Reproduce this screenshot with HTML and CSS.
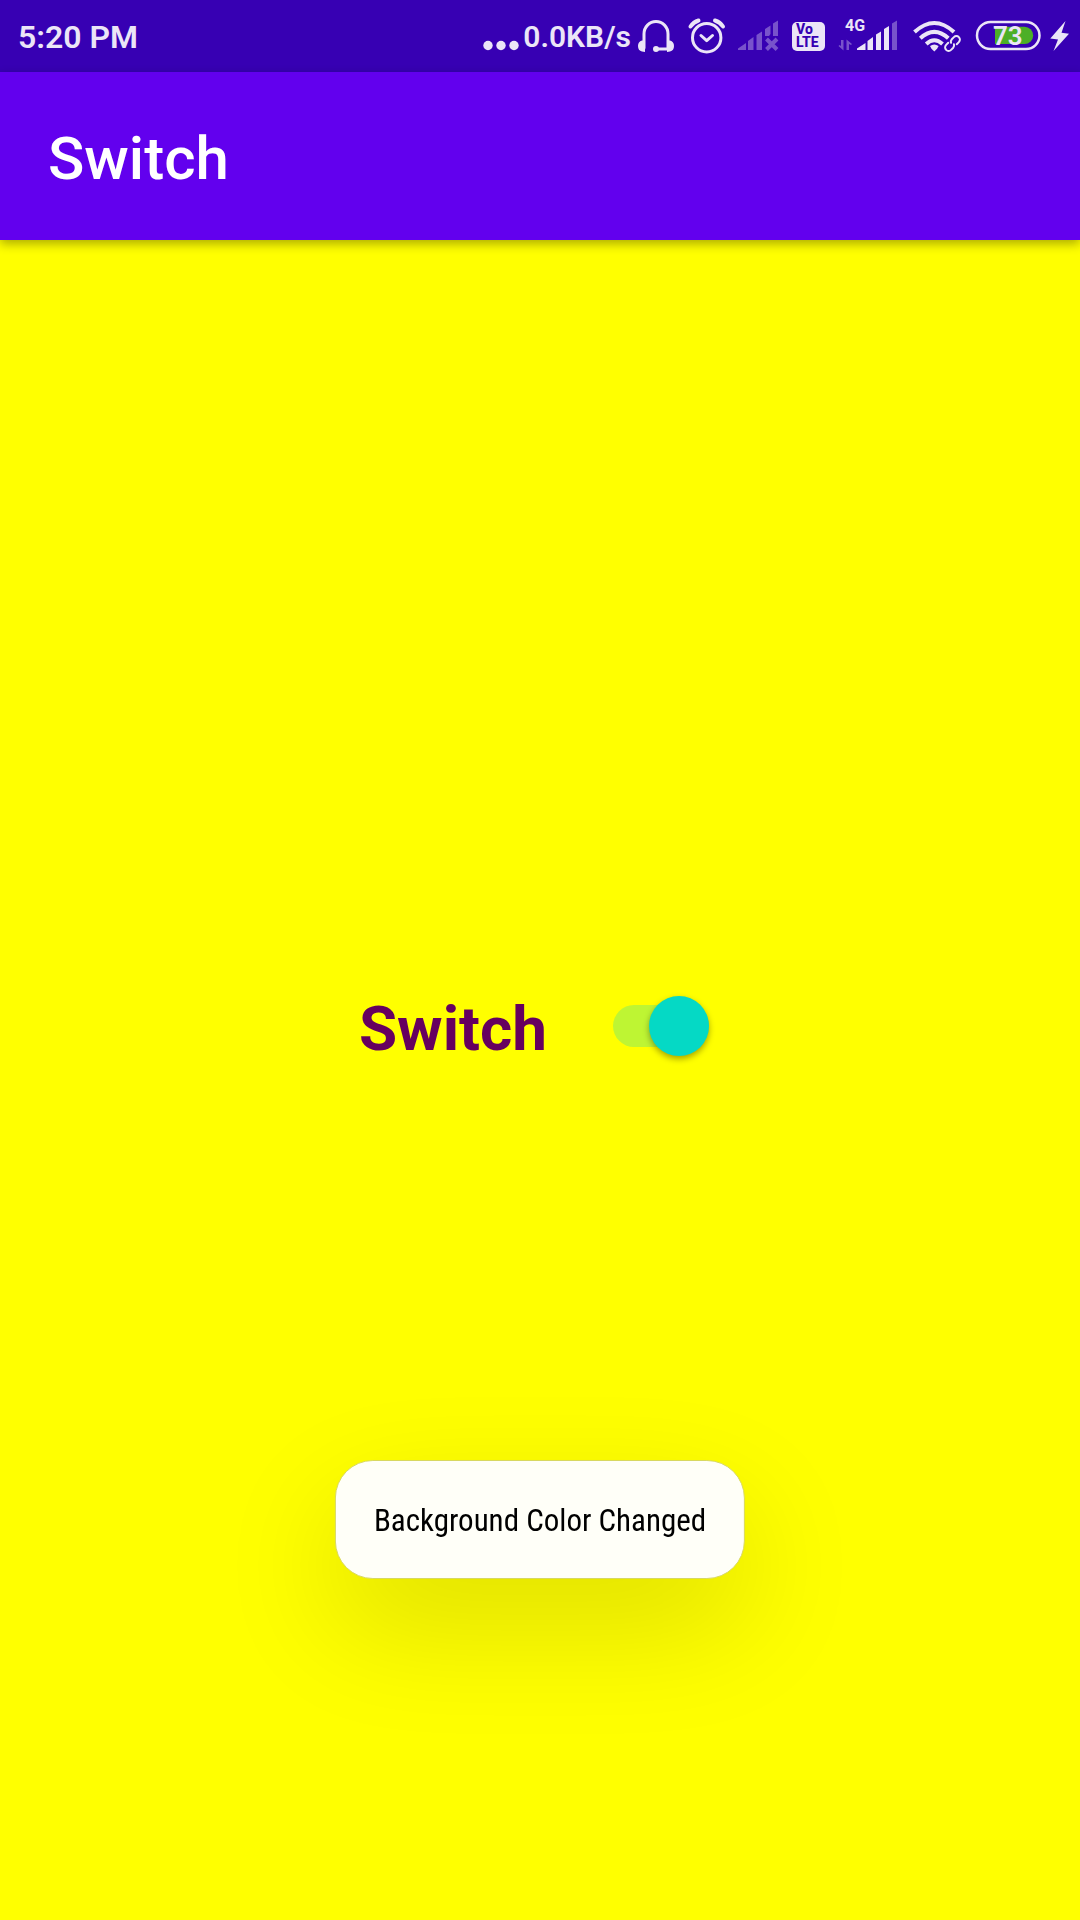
FILE: index.html
```html
<!DOCTYPE html>
<html lang="en">
<head>
<meta charset="utf-8">
<meta name="viewport" content="width=device-width, initial-scale=1">
<title>Switch</title>
<link rel="stylesheet" href="styles.css">
</head>
<body>
<div class="status-bar">
  <span class="clock">5:20 PM</span>
  <div class="status-icons">
    <div class="network-speed">
      <svg class="icon" width="36" height="44" viewBox="0 0 36 44" aria-hidden="true">
        <circle cx="5" cy="31.500" r="4.700"/><circle cx="18" cy="31.500" r="4.700"/><circle cx="31" cy="31.500" r="4.700"/>
      </svg>
      <span>0.0KB/s</span>
    </div>
    <!-- headset -->
    <svg class="icon" width="41" height="44" viewBox="0 0 41 44" aria-hidden="true">
      <path class="line" stroke-width="3" d="M7 34V20a12 12.500 0 0 1 24 0v14M19 35h12"/>
      <path d="M8 26.500H5q-4 1-4 5.500t4 5.500l3 .5zM30 26.500h3q4 1 4 5.500t-4 5.500l-3 .5z"/>
      <circle cx="19" cy="35" r="3"/>
    </svg>
    <!-- alarm -->
    <svg class="icon" width="43" height="44" viewBox="0 0 43 44" aria-hidden="true">
      <circle class="line" stroke-width="3" cx="20.700" cy="23.700" r="14.200"/>
      <path class="line" stroke-width="3" d="M15 21.500l5.700 5.200 5.800-5.200"/>
      <path class="line" stroke-width="4" d="M4.500 12.500q3-4.500 8-6M29 6.500q5 1.500 8 6"/>
    </svg>
    <!-- first SIM, no signal -->
    <svg class="icon faint" width="42" height="44" viewBox="0 0 42 44" aria-hidden="true">
      <path d="M1 36v-1.500L9 29v7zM11 36v-9l5.500-4v13zM19.500 36V21l5.500-3.500V36zM28 22v-7l5.500-3.500V20L32 22zM36 22V9.500L41 6.500V22z"/>
      <path class="cross" d="M29.500 25l10.500 10.500M40 25L29.500 35.500"/>
    </svg>
    <svg class="icon" width="40" height="44" viewBox="0 0 40 44" role="img" aria-label="VoLTE">
      <rect x="5" y="8" width="33" height="29" rx="5"/>
      <text class="volte" x="9" y="20">Vo</text>
      <text class="volte" x="9" y="33">LTE</text>
    </svg>
    <!-- second SIM, 4G -->
    <svg class="icon" width="66" height="44" viewBox="0 0 66 44" aria-hidden="true">
      <text class="generation" x="10" y="17">4G</text>
      <path class="faint" d="M6 26h2.500v10.500L3.500 32l1-1 1.500 1zM11.500 36V25.500l5.500 4.500-1 1-2-1v6z"/>
      <path d="M22 36v-1.500L30.500 29v7zM32.500 36v-9l5.500-4v13zM41 36V20.500l5-3V36zM49 36V15l5-3v24z"/>
      <path class="faint" d="M57 36V9.500l5-3V36z"/>
    </svg>
    <!-- wifi with link -->
    <svg class="icon" width="58" height="44" viewBox="0 0 58 44" aria-hidden="true">
      <path class="arc" d="M5.500 18Q25.300 0 45 18M11.300 24.200Q25.300 11.500 39.300 24.200M17.200 30Q25.300 22.500 33.500 30"/>
      <path d="M21 32q4.300-3 8.600 0l-1.500 2.800-2.800 2.700-2.800-2.700z"/>
      <g transform="translate(43.500 29.500) rotate(-45)">
        <path class="link-gap" d="M-5 0h10"/>
        <path class="link" d="M-2.500-3.500h-3a3.500 3.500 0 0 0 0 7h3a3.500 3.500 0 0 0 3-2M2.500 3.500h3a3.500 3.500 0 0 0 0-7h-3a3.500 3.500 0 0 0-3 2"/>
      </g>
    </svg>
    <svg class="icon" width="66" height="44" viewBox="0 0 66 44" role="img" aria-label="Battery 73 percent">
      <rect class="line" stroke-width="2.500" x="2" y="8" width="62.500" height="27" rx="13.500"/>
      <path class="charge" d="M20 12.700h29.500a8.700 8.700 0 0 1 0 17.400H20z"/>
      <text class="level" x="18" y="31">73</text>
    </svg>
    <!-- charging -->
    <svg class="icon" width="21" height="44" viewBox="0 0 21 44" aria-hidden="true">
      <path d="M16.500 7L1.300 24.500l7.700 1L4.500 37 20 19.700l-7.500-1z"/>
    </svg>
  </div>
</div>
<header class="app-bar"><h1>Switch</h1></header>
<main class="content">
  <div class="switch-row">
    <label for="color-switch">Switch</label>
    <input id="color-switch" class="switch" type="checkbox" role="switch" checked>
  </div>
</main>
<div class="toast" role="status">Background Color Changed</div>
</body>
</html>
```

FILE: styles.css
```css
* { box-sizing: border-box; }

body {
  margin: 0;
  min-height: 100vh;
  display: flex;
  flex-direction: column;
  background: #ffff00;
  font-family: Roboto, "Liberation Sans", sans-serif;
}

.status-bar {
  height: 72px;
  padding: 0 10px 0 18px;
  display: flex;
  align-items: center;
  justify-content: space-between;
  background: #3700b3;
  color: #ebe5f7;
}

.clock { padding-top: 2px; font-size: 32px; font-weight: 600; }

.status-icons {
  display: flex;
  align-items: center;
  gap: 8px;
}

.network-speed {
  display: flex;
  align-items: center;
  gap: 4px;
  margin-right: -2px;
  font-size: 30px;
  font-weight: 600;
}

.icon { display: block; flex: none; fill: #ebe5f7; }
.icon .line, .icon .arc, .icon .link {
  fill: none;
  stroke: #ebe5f7;
  stroke-linecap: round;
  stroke-linejoin: round;
}
.icon .arc { stroke-width: 4; stroke-linecap: butt; }
.icon .link { stroke-width: 2; }
.icon .link-gap { stroke: #3700b3; stroke-width: 12; stroke-linecap: round; }
.icon .cross { fill: none; stroke: #ebe5f7; stroke-width: 4; }
.faint { opacity: 0.36; }
.icon .volte { fill: #3700b3; font-size: 14px; font-weight: 800; }
.generation { font-size: 16px; font-weight: 700; }
.icon .charge { fill: #4caf27; }
.level { font-size: 26px; font-weight: 600; }

.app-bar {
  min-height: 168px;
  padding: 5px 48px 0;
  display: flex;
  align-items: center;
  background: #6200ee;
  color: #fff;
  box-shadow: 0 4px 10px rgba(0, 0, 0, 0.32);
}

.app-bar h1 { margin: 0; font-size: 60px; font-weight: 500; line-height: 72px; }

.content {
  flex: 1;
  display: flex;
  align-items: center;
  justify-content: center;
  padding-bottom: 108px;
}

.switch-row {
  display: flex;
  align-items: center;
  gap: 66px;
  padding-right: 12px;
}

.switch-row label {
  padding-top: 5px;
  color: #66005f;
  font-size: 62px;
  font-weight: 700;
  line-height: 72px;
}

.switch {
  appearance: none;
  width: 96px;
  height: 42px;
  margin: 0;
  display: flex;
  align-items: center;
  border-radius: 21px;
  background: rgba(3, 218, 197, 0.26);
}

.switch::before {
  content: "";
  flex: none;
  width: 60px;
  height: 60px;
  border-radius: 50%;
  background: #05d9c5;
  box-shadow: 0 3px 6px rgba(0, 0, 0, 0.35);
}

.switch:checked { justify-content: flex-end; }

.toast {
  position: fixed;
  left: 50%;
  bottom: 341px;
  transform: translateX(-50%);
  padding: 39px 38px 36px;
  border: 1px solid #d8d860;
  border-radius: 38px;
  background: #fffff8;
  color: #000;
  font-family: "Roboto Condensed", Roboto, sans-serif;
  font-size: 31px;
  line-height: 42px;
  white-space: nowrap;
  box-shadow: 0 46px 120px rgba(0, 0, 0, 0.13);
}
```
